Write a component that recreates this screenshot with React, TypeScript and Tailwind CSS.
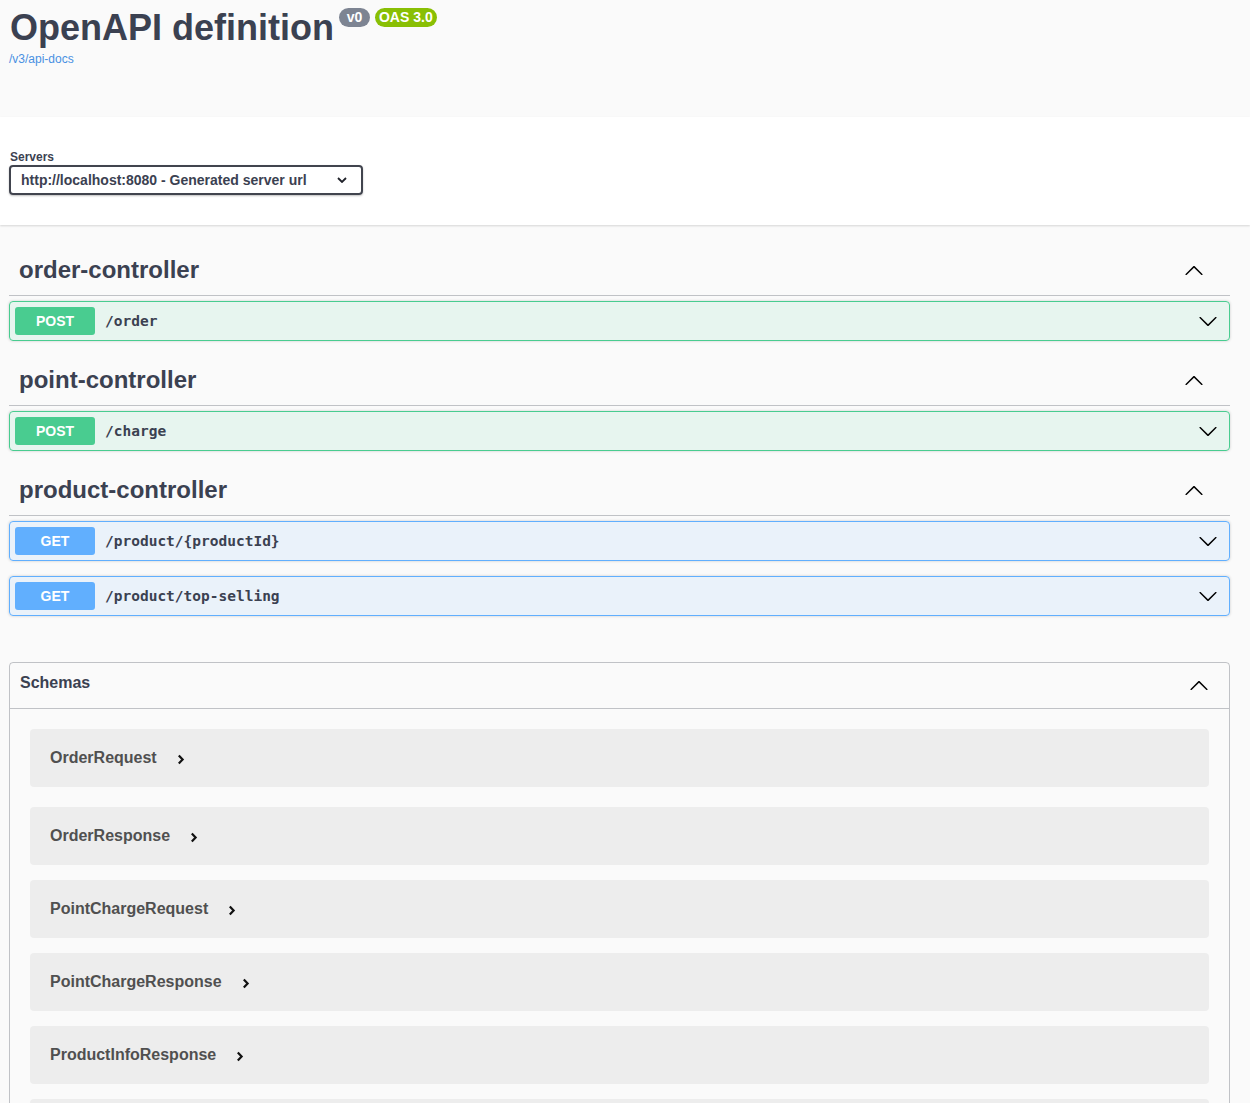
import React from "react";

const ARROW =
  "M17.418 6.109c.272-.268.709-.268.979 0s.271.701 0 .969l-7.908 7.83c-.27.268-.707.268-.979 0l-7.908-7.83c-.27-.268-.27-.701 0-.969.271-.268.709-.268.979 0L10 13.25l7.418-7.141z";

function Arrow({ up = false }: { up?: boolean }) {
  return (
    <svg
      width="20"
      height="20"
      viewBox="0 0 20 20"
      className={up ? "rotate-180 shrink-0" : "shrink-0"}
      aria-hidden="true"
    >
      <path d={ARROW} fill="#000" />
    </svg>
  );
}

type Op = { method: "POST" | "GET"; path: string };

function OpBlock({ method, path }: Op) {
  const post = method === "POST";
  return (
    <div
      className={
        "mb-[15px] flex h-[40px] items-center rounded-[4px] border pl-[5px] pr-[11px] shadow-[0_0_3px_rgba(0,0,0,0.19)] " +
        (post
          ? "border-[#49cc90] bg-[rgba(73,204,144,0.1)]"
          : "border-[#61affe] bg-[rgba(97,175,254,0.1)]")
      }
    >
      <div
        className={
          "flex h-[28px] w-[80px] items-center justify-center rounded-[3px] text-[14px] font-bold text-white " +
          (post ? "bg-[#49cc90]" : "bg-[#61affe]")
        }
      >
        {method}
      </div>
      <span className="ml-[10px] mt-[2px] font-['DejaVu_Sans_Mono',monospace] text-[14.5px] font-bold text-[#3b4151]">
        {path}
      </span>
      <div className="ml-auto">
        <Arrow />
      </div>
    </div>
  );
}

function TagSection({ name, ops }: { name: string; ops: Op[] }) {
  return (
    <div>
      <div className="mb-[5px] flex h-[50px] items-center justify-between border-b border-[rgba(59,65,81,0.3)] pl-[10px] pr-[26px]">
        <h3 className="pb-[2px] text-[24px] font-bold leading-[30px] text-[#3b4151]">{name}</h3>
        <Arrow up />
      </div>
      {ops.map((o) => (
        <OpBlock key={o.path} {...o} />
      ))}
    </div>
  );
}

const schemas = [
  "OrderRequest",
  "OrderResponse",
  "PointChargeRequest",
  "PointChargeResponse",
  "ProductInfoResponse",
];

export default function App() {
  return (
    <div className="min-h-screen bg-[#fafafa] font-['Liberation_Sans',Arial,sans-serif] text-[#3b4151]">
      {/* info header */}
      <div className="h-[117px] pl-[9px] pt-[7px]">
        <div className="flex items-start">
          <h1 className="ml-px text-[36px] font-bold leading-[41px] text-[#3b4151]">
            OpenAPI definition
          </h1>
          <span className="ml-[5px] mt-[1px] flex h-[19px] w-[31px] items-center justify-center rounded-full bg-[#7d8492] text-[14px] font-bold leading-[19px] text-white">
            v0
          </span>
          <span className="ml-[5px] mt-[1px] flex h-[19px] items-center justify-center rounded-full bg-[#89bf04] px-[4px] text-[14px] font-bold leading-[19px] text-white">
            OAS 3.0
          </span>
        </div>
        <a className="mt-[4px] block text-[12px] leading-[14px] text-[#4990e2]" href="#">
          /v3/api-docs
        </a>
      </div>

      {/* servers */}
      <div className="bg-white py-[30px] shadow-[0_1px_2px_0_rgba(0,0,0,0.15)]">
        <div className="pl-[9px]">
          <div className="ml-px h-[18px] pt-[3px] text-[12px] font-bold leading-[14px] text-[#3b4151]">
            Servers
          </div>
          <div className="flex h-[30px] w-[354px] items-center rounded-[4px] border-2 border-[#41444e] pl-[10px] pr-[14px] text-[14px] font-bold text-[#3b4151] shadow-[0_1px_2px_0_rgba(0,0,0,0.25)]">
            <span>http://localhost:8080 - Generated server url</span>
            <svg width="10" height="6" viewBox="0 0 10 6" className="ml-auto">
              <polyline points="1,1 5,5 9,1" fill="none" stroke="#1f2129" strokeWidth="1.8" />
            </svg>
          </div>
        </div>
      </div>

      {/* operations */}
      <div className="ml-[9px] mr-[20px] mt-[21px]">
        <TagSection name="order-controller" ops={[{ method: "POST", path: "/order" }]} />
        <TagSection name="point-controller" ops={[{ method: "POST", path: "/charge" }]} />
        <TagSection
          name="product-controller"
          ops={[
            { method: "GET", path: "/product/{productId}" },
            { method: "GET", path: "/product/top-selling" },
          ]}
        />

        {/* schemas */}
        <div className="mt-[46px] rounded-[4px] border border-[rgba(59,65,81,0.3)]">
          <div className="flex h-[46px] items-center justify-between border-b border-[rgba(59,65,81,0.3)] pl-[10px] pr-[20px]">
            <span className="pb-[5px] text-[16px] font-bold text-[#3b4151]">Schemas</span>
            <Arrow up />
          </div>
          <div className="pt-[20px]">
            {schemas.map((s, i) => (
              <div
                key={s}
                className={
                  "mx-[20px] flex h-[58px] items-center rounded-[4px] bg-[rgba(0,0,0,0.05)] pl-[20px] " +
                  (i === 0 ? "mb-[20px]" : "mb-[15px]")
                }
              >
                <span className="text-[16px] font-bold text-[#505050]">{s}</span>
                <svg width="8" height="11" viewBox="0 0 8 11" className="ml-[20px] mt-[2px]">
                  <polyline points="1.8,1.6 5.6,5.5 1.8,9.4" fill="none" stroke="#111" strokeWidth="2.2" />
                </svg>
              </div>
            ))}
            <div className="mx-[20px] h-[58px] rounded-[4px] bg-[rgba(0,0,0,0.05)]" />
          </div>
        </div>
      </div>
    </div>
  );
}
